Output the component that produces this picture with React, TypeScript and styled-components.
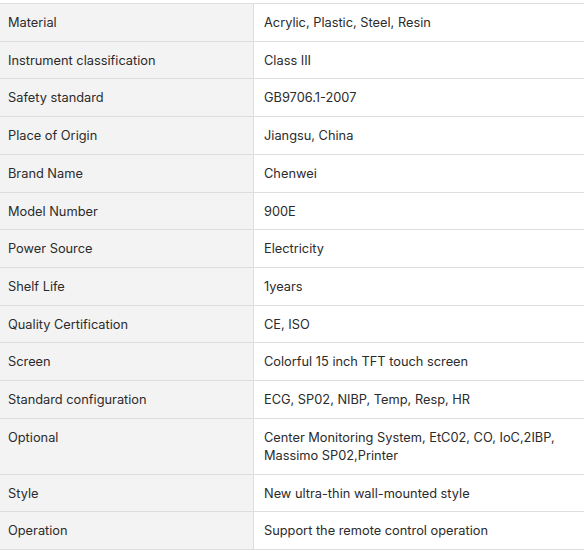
import React from "react";
import styled, { createGlobalStyle } from "styled-components";

const Global = createGlobalStyle`
  html, body { margin: 0; padding: 0; background: #ffffff; }
  body { font-family: Inter, "Noto Sans", Arial, sans-serif; }
`;

const Wrap = styled.div`
  padding-top: 3px;
  width: 584px;
`;

const Table = styled.table`
  width: 584px;
  border-collapse: collapse;
  table-layout: fixed;
  font-family: Inter, "Noto Sans", Arial, sans-serif;
  font-size: 12.8px;
  line-height: 18.2px;
  color: #2b2b2b;
`;

const Row = styled.tr`
  border-top: 1px solid #dedede;
  border-bottom: 1px solid #dedede;
`;

const Label = styled.td`
  width: 245px;
  background: #f3f3f3;
  padding: 10px 0 8.5px 8px;
  border-right: 1px solid #dedede;
  vertical-align: top;
  text-align: left;
  font-weight: 400;
`;

const Value = styled.td`
  padding: 10px 10px 8.5px 10px;
  vertical-align: top;
  background: #ffffff;
`;

const rows: [string, string][] = [
  ["Material", "Acrylic, Plastic, Steel, Resin"],
  ["Instrument classification", "Class III"],
  ["Safety standard", "GB9706.1-2007"],
  ["Place of Origin", "Jiangsu, China"],
  ["Brand Name", "Chenwei"],
  ["Model Number", "900E"],
  ["Power Source", "Electricity"],
  ["Shelf Life", "1years"],
  ["Quality Certification", "CE, ISO"],
  ["Screen", "Colorful 15 inch TFT touch screen"],
  ["Standard configuration", "ECG, SP02, NIBP, Temp, Resp, HR"],
  ["Optional", "Center Monitoring System, EtC02, CO, IoC,2IBP, Massimo SP02,Printer"],
  ["Style", "New ultra-thin wall-mounted style"],
  ["Operation", "Support the remote control operation"],
];

export default function App() {
  return (
    <Wrap>
      <Global />
      <Table>
        <tbody>
          {rows.map(([k, v]) => (
            <Row key={k}>
              <Label>{k}</Label>
              <Value>{v}</Value>
            </Row>
          ))}
        </tbody>
      </Table>
    </Wrap>
  );
}
